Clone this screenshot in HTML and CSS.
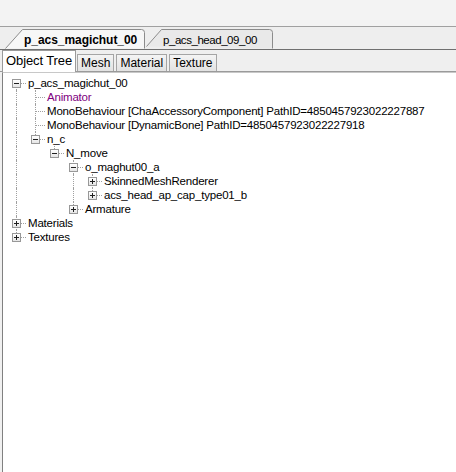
FILE: index.html
```html
<!DOCTYPE html>
<html>
<head>
<meta charset="utf-8">
<link rel="stylesheet" href="styles.css">
</head>
<body>
<div class="window">
  <div class="top-gap"></div>
  <div class="doc-tabs">
    <div class="doc-tab active">
      <svg class="tab-shape" width="142" height="20" viewBox="0 0 142 20">
        <path d="M0.5 19.5 L17.5 0.5 L136.5 0.5 Q139.5 0.5 139.5 3.5 L139.5 19.5" fill="#f7f7f7" stroke="#8c8c8c"/>
      </svg>
      <span class="doc-label bold">p_acs_magichut_00</span>
    </div>
    <div class="doc-tab">
      <svg class="tab-shape" width="130" height="20" viewBox="0 0 130 20">
        <path d="M0.5 17.5 L15.5 0.5 L123.5 0.5 Q126.5 0.5 126.5 3.5 L126.5 19.5" fill="#e9e9e9" stroke="#8c8c8c"/>
      </svg>
      <span class="doc-label">p_acs_head_09_00</span>
    </div>
  </div>
  <div class="view-tabs">
    <div class="view-tab active">Object Tree</div>
    <div class="view-tab">Mesh</div>
    <div class="view-tab">Material</div>
    <div class="view-tab">Texture</div>
  </div>
  <div class="content">
    <div class="tree">
      <div class="row"><span class="cell first"><i class="btn minus"></i></span><span class="label">p_acs_magichut_00</span></div>
      <div class="row"><span class="cell v"></span><span class="cell tee"></span><span class="label purple">Animator</span></div>
      <div class="row"><span class="cell v"></span><span class="cell tee"></span><span class="label">MonoBehaviour [ChaAccessoryComponent] PathID=4850457923022227887</span></div>
      <div class="row"><span class="cell v"></span><span class="cell tee"></span><span class="label">MonoBehaviour [DynamicBone] PathID=4850457923022227918</span></div>
      <div class="row"><span class="cell v"></span><span class="cell ell"><i class="btn minus"></i></span><span class="label">n_c</span></div>
      <div class="row"><span class="cell v"></span><span class="cell"></span><span class="cell ell"><i class="btn minus"></i></span><span class="label">N_move</span></div>
      <div class="row"><span class="cell v"></span><span class="cell"></span><span class="cell"></span><span class="cell tee"><i class="btn minus"></i></span><span class="label">o_maghut00_a</span></div>
      <div class="row"><span class="cell v"></span><span class="cell"></span><span class="cell"></span><span class="cell v"></span><span class="cell tee"><i class="btn plus"></i></span><span class="label">SkinnedMeshRenderer</span></div>
      <div class="row"><span class="cell v"></span><span class="cell"></span><span class="cell"></span><span class="cell v"></span><span class="cell ell"><i class="btn plus"></i></span><span class="label">acs_head_ap_cap_type01_b</span></div>
      <div class="row"><span class="cell v"></span><span class="cell"></span><span class="cell"></span><span class="cell ell"><i class="btn plus"></i></span><span class="label">Armature</span></div>
      <div class="row"><span class="cell tee"><i class="btn plus"></i></span><span class="label">Materials</span></div>
      <div class="row"><span class="cell ell"><i class="btn plus"></i></span><span class="label">Textures</span></div>
    </div>
  </div>
</div>
</body>
</html>
```
FILE: styles.css
```css
html, body {
  margin: 0;
  padding: 0;
  background: #f0f0f0;
}
.window {
  width: 456px;
  height: 472px;
  display: flex;
  flex-direction: column;
  font-family: "Liberation Sans", Arial, sans-serif;
  font-size: 11.5px;
  letter-spacing: -0.2px;
  color: #000;
  overflow: hidden;
}
.top-gap {
  height: 26px;
  background: #f3f3f3;
  border-bottom: 1px solid #a0a0a0;
  flex: none;
}
.doc-tabs {
  height: 22px;
  background: #eeeeee;
  border-bottom: 1px solid #6f6f6f;
  display: flex;
  align-items: flex-end;
  padding-left: 5px;
  flex: none;
}
.doc-tab {
  position: relative;
  height: 20px;
  display: flex;
  align-items: center;
  flex: none;
}
.doc-tab.active { width: 140px; }
.doc-tab:not(.active) { width: 127px; margin-left: 1px; }
.tab-shape {
  position: absolute;
  left: 0;
  top: 0;
}
.doc-label {
  position: relative;
  padding-left: 17px;
  padding-top: 1px;
}
.doc-tab:not(.active) .doc-label { padding-left: 17px; letter-spacing: -0.45px; }
.bold { font-weight: bold; font-size: 12px; letter-spacing: -0.05px; padding-left: 19px; }
.view-tabs {
  height: 21px;
  display: flex;
  align-items: flex-end;
  padding-left: 2px;
  background: #efefef;
  border-bottom: 1px solid #9a9a9a;
  flex: none;
  position: relative;
  z-index: 1;
}
.view-tab {
  height: 17px;
  line-height: 17px;
  font-size: 12px;
  letter-spacing: 0;
  padding: 0 3px 0 3px;
  border: 1px solid #a5a5a5;
  border-bottom: none;
  background: linear-gradient(#f4f4f4, #e2e2e2);
  margin-right: 2px;
  box-sizing: border-box;
}
.view-tab.active {
  height: 22px;
  line-height: 20px;
  background: #ffffff;
  margin-bottom: -1px;
  padding: 0 3px 0 3px;
  font-size: 13px;
  letter-spacing: -0.1px;
  border-color: #9a9a9a;
  margin-right: 1px;
}
.content {
  flex: 1;
  background: #ffffff;
  margin-left: 2px;
  border-left: 1px solid #808080;
  border-top: 1px solid #c8c8c8;
  padding-top: 3px;
}
.tree {
  padding-left: 4px;
  display: flex;
  flex-direction: column;
}
.row {
  height: 14px;
  display: flex;
  align-items: center;
  white-space: nowrap;
}
.cell {
  width: 19px;
  height: 14px;
  flex: none;
  position: relative;
}
.cell.v::before,
.cell.tee::before,
.cell.ell::before,
.cell.first::before {
  content: "";
  position: absolute;
  left: 9px;
  width: 0;
  border-left: 1px dotted #a0a0a0;
}
.cell.v::before, .cell.tee::before { top: 0; height: 14px; }
.cell.ell::before { top: 0; height: 7px; }
.cell.first::before { top: 7px; height: 7px; }
.cell.tee::after,
.cell.ell::after,
.cell.first::after {
  content: "";
  position: absolute;
  left: 10px;
  top: 7px;
  width: 9px;
  height: 0;
  border-top: 1px dotted #a0a0a0;
}
.btn {
  position: absolute;
  left: 5px;
  top: 3px;
  width: 9px;
  height: 9px;
  box-sizing: border-box;
  border: 1px solid #989898;
  z-index: 1;
  background: linear-gradient(#ffffff, #e6e6e6);
}
.btn::before {
  content: "";
  position: absolute;
  left: 1px;
  top: 3px;
  width: 5px;
  height: 1px;
  background: #202020;
}
.btn.plus::after {
  content: "";
  position: absolute;
  left: 3px;
  top: 1px;
  width: 1px;
  height: 5px;
  background: #202020;
}
.label {
  margin-left: 2px;
  line-height: 14px;
}
.purple { color: #800080; }
```
